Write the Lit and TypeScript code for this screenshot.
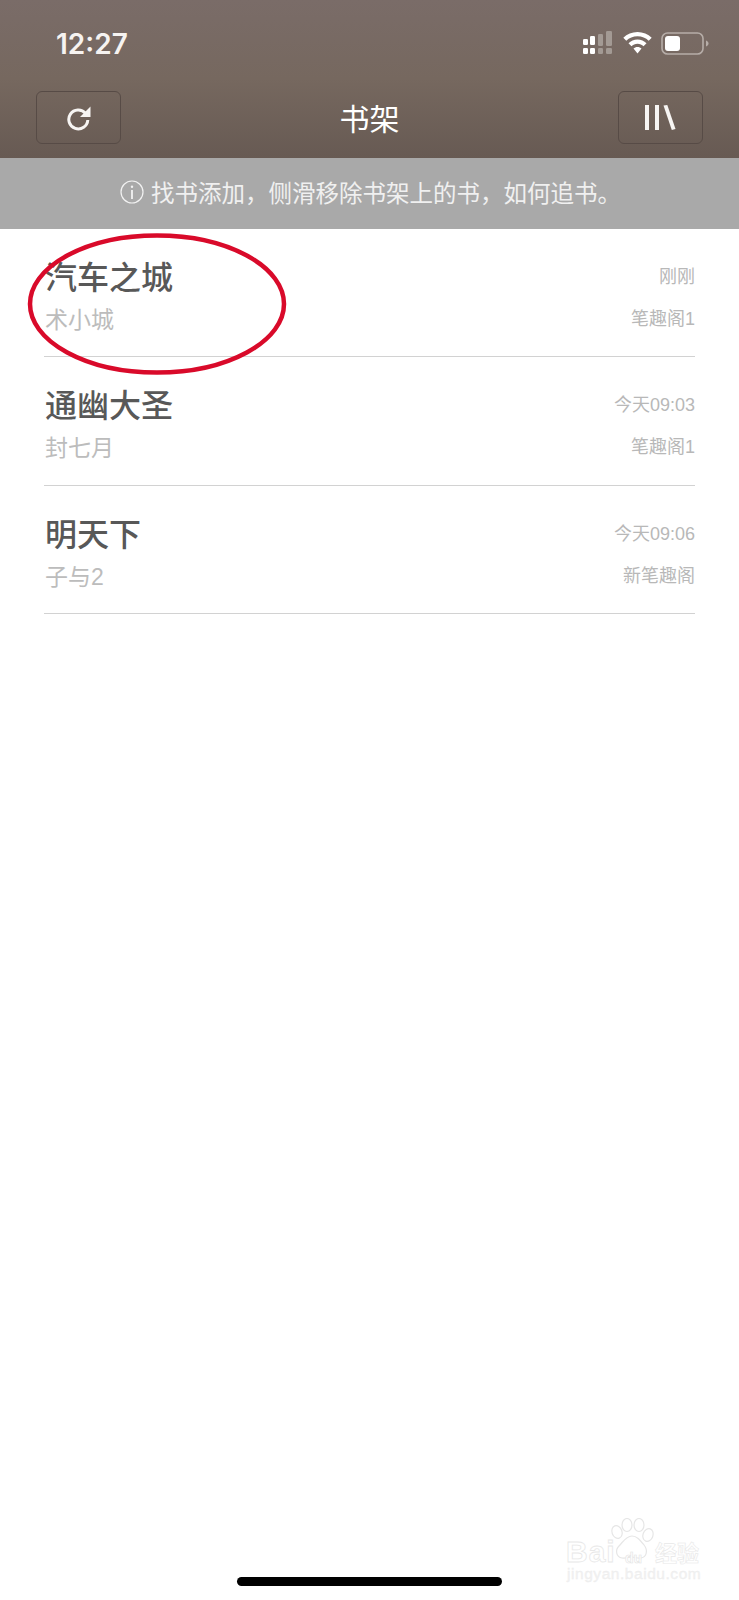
import { LitElement, html, css, svg } from "lit";
import { customElement } from "lit/decorators.js";

const books = [
  { title: "汽车之城", author: "术小城", time: "刚刚", source: "笔趣阁1" },
  { title: "通幽大圣", author: "封七月", time: "今天09:03", source: "笔趣阁1" },
  { title: "明天下", author: "子与2", time: "今天09:06", source: "新笔趣阁" },
];

@customElement("app-root")
export class AppRoot extends LitElement {
  static styles = css`
    :host {
      display: block;
      position: relative;
      width: 739px;
      height: 1600px;
      overflow: hidden;
      background: #fff;
      font-family: "Liberation Sans", "Noto Sans CJK SC", sans-serif;
    }
    .top {
      height: 158px;
      box-sizing: border-box;
      background: linear-gradient(180deg, #7a6c68 0%, #76685f 50%, #675a53 100%);
      display: flex;
      flex-direction: column;
      padding: 0 36px 14px;
      color: #fff;
    }
    .status {
      height: 91px;
      display: flex;
      align-items: flex-start;
      justify-content: space-between;
    }
    .time {
      font-family: Inter, "Liberation Sans", sans-serif;
      font-size: 28px;
      font-weight: 600;
      line-height: 32px;
      margin: 28px 0 0 20px;
      color: #f6f3f1;
    }
    .status-icons {
      display: flex;
      align-items: center;
      gap: 9px;
      margin: 31px -6px 0 0;
    }
    .status-icons svg {
      display: block;
    }
    .nav {
      height: 53px;
      display: flex;
      align-items: center;
      justify-content: space-between;
    }
    .btn {
      width: 85px;
      height: 53px;
      box-sizing: border-box;
      border: 1px solid #574b46;
      border-radius: 6px;
      display: flex;
      align-items: center;
      justify-content: center;
    }
    .page-title {
      font-family: "Noto Sans CJK SC", sans-serif;
      font-size: 30px;
      line-height: 53px;
      color: #fff;
    }
    .notice {
      height: 71px;
      box-sizing: border-box;
      padding: 0 0 4px 2px;
      background: #a9a9a9;
      display: flex;
      align-items: center;
      justify-content: center;
      gap: 7px;
      color: #f0f0f0;
      font-family: "Noto Sans CJK SC", sans-serif;
      font-size: 23.5px;
      font-weight: 400;
    }
    .notice svg {
      display: block;
    }
    .list {
      padding: 0 44px;
    }
    .row {
      height: 128.3px;
      box-sizing: border-box;
      border-bottom: 1px solid #d2d2d2;
      display: flex;
      justify-content: space-between;
      padding-top: 24px;
    }
    .left,
    .right-col {
      display: flex;
      flex-direction: column;
    }
    .left {
      padding-left: 1px;
    }
    .right-col {
      align-items: flex-end;
      padding-top: 11px;
      color: #b8b8b8;
      font-size: 18px;
    }
    .right-col .t {
      line-height: 26px;
      height: 26px;
    }
    .right-col .s {
      line-height: 26px;
      margin-top: 16px;
    }
    .name {
      font-family: "Noto Sans CJK SC", sans-serif;
      font-size: 32px;
      font-weight: 500;
      line-height: 44px;
      color: #585858;
    }
    .author {
      font-size: 23px;
      line-height: 34px;
      margin-top: 6px;
      color: #bcbcbc;
    }
    .circle {
      position: absolute;
      left: 24px;
      top: 230px;
      pointer-events: none;
    }
    .home {
      position: absolute;
      left: 237px;
      top: 1577px;
      width: 265px;
      height: 9px;
      border-radius: 5px;
      background: #000;
    }
    .mark {
      position: absolute;
      left: 566px;
      top: 1518px;
      width: 136px;
      height: 68px;
      color: #fff;
    }
    .mark svg {
      position: absolute;
      left: 44px;
      top: 0;
    }
    .mark span {
      position: absolute;
      white-space: nowrap;
      color: #fff;
      -webkit-text-stroke: 0.8px #e8e8e8;
    }
    .mark .bai {
      left: 0;
      top: 16px;
      font: 700 30px/36px "Liberation Sans", sans-serif;
      letter-spacing: 1px;
    }
    .mark .du {
      left: 59px;
      top: 32px;
      font: 700 14px/16px "Liberation Sans", sans-serif;
      -webkit-text-stroke: 0.6px #e4e4e4;
    }
    .mark .jy {
      left: 89px;
      top: 19px;
      font: 700 22px/28px "Noto Sans CJK SC", sans-serif;
      -webkit-text-stroke: 0.6px #e8e8e8;
    }
    .mark .url {
      left: 1px;
      top: 46px;
      color: #f2f2f2;
      font: 400 15.5px/20px "Liberation Sans", sans-serif;
      letter-spacing: 0.55px;
      -webkit-text-stroke: 0.3px #ececec;
    }
  `;

  private signal() {
    return html`<svg width="31" height="24" viewBox="0 0 31 24">
      <g fill="#fff">
        <rect x="0" y="8" width="5" height="6" rx="1.2" />
        <rect x="7" y="5" width="5" height="9" rx="1.2" />
        <rect x="0" y="17" width="5" height="6" rx="1.2" />
        <rect x="7" y="17" width="5" height="6" rx="1.2" />
      </g>
      <g fill="#a39a94">
        <rect x="15" y="3" width="5" height="12" rx="1.2" />
        <rect x="23" y="0" width="6" height="15" rx="1.2" />
        <rect x="15" y="17" width="5" height="6" rx="1.2" />
        <rect x="23" y="17" width="6" height="6" rx="1.2" />
      </g>
    </svg>`;
  }

  private wifi() {
    return html`<svg width="29" height="22" viewBox="0 0 29 22" fill="#fff">
      <path d="M14.5 0C9 0 4 2.2 .3 5.8l3 3C6.200 6 10.100 4.300 14.500 4.300S22.800 6 25.700 8.800l3-3C25 2.200 20 0 14.500 0z" />
      <path d="M14.500 7.500c-3.500 0-6.700 1.400-9 3.700l3 3c1.500-1.500 3.600-2.400 6-2.400s4.500.9 6 2.400l3-3c-2.300-2.300-5.500-3.700-9-3.700z" />
      <path d="M14.500 15c-1.600 0-3 .6-4 1.600l4 5 4-5c-1-1-2.400-1.600-4-1.600z" />
    </svg>`;
  }

  private battery() {
    return html`<svg width="48" height="23" viewBox="0 0 48 23">
      <rect x="1" y="1" width="41" height="21" rx="5.500" fill="none" stroke="#b6ada8" stroke-width="1.600" />
      <rect x="4" y="4" width="15" height="15" rx="3" fill="#fff" />
      <path d="M45 8.500c1.500.5 2.500 1.600 2.500 3s-1 2.500-2.500 3z" fill="#b6ada8" />
    </svg>`;
  }

  private refresh() {
    return html`<svg width="26" height="26" viewBox="0 0 26 26" fill="none">
      <path d="M19.500 8.200A9.500 9.500 0 1 0 21.800 15" stroke="#f7f5f3" stroke-width="3" />
      <path d="M24.500 1.500V12H14z" fill="#f7f5f3" />
    </svg>`;
  }

  private shelf() {
    return html`<svg width="31" height="25" viewBox="0 0 31 25" fill="#f7f5f3">
      <rect x="0" y="0" width="4" height="25" />
      <rect x="10" y="0" width="4" height="25" />
      <path d="M18.500 0.500 22.300 0 30.500 24 26.800 25z" />
    </svg>`;
  }

  private info() {
    return html`<svg width="24" height="24" viewBox="0 0 24 24" fill="none" stroke="#f2f2f2">
      <circle cx="12" cy="12" r="11" stroke-width="1.200" />
      <path d="M12 10v9" stroke-width="1.800" />
      <circle cx="12" cy="6.800" r="1.200" fill="#f2f2f2" stroke="none" />
    </svg>`;
  }

  private paw() {
    return svg`<g fill="#fff" stroke="#e6e6e6" stroke-width="1.200">
      <ellipse cx="7" cy="14" rx="5" ry="6.500" transform="rotate(-20 7 14)" />
      <ellipse cx="17" cy="7" rx="5" ry="6.500" />
      <ellipse cx="29" cy="7" rx="5" ry="6.500" />
      <ellipse cx="38" cy="17" rx="5" ry="6.500" transform="rotate(20 38 17)" />
      <path d="M22 18c5 0 8 4 12 9 4 5 3 12-3 13-4 .6-6-1-9-1s-6 1.600-10 1c-6-1-7-8-3-12 4-4 7-10 13-10z" />
    </g>`;
  }

  render() {
    return html`
      <div class="top">
        <div class="status">
          <div class="time">12:27</div>
          <div class="status-icons">${this.signal()}${this.wifi()}${this.battery()}</div>
        </div>
        <div class="nav">
          <div class="btn">${this.refresh()}</div>
          <div class="page-title">书架</div>
          <div class="btn">${this.shelf()}</div>
        </div>
      </div>
      <div class="notice">${this.info()}<span>找书添加，侧滑移除书架上的书，如何追书。</span></div>
      <div class="list">
        ${books.map(
          (b) => html`<div class="row">
            <div class="left">
              <div class="name">${b.title}</div>
              <div class="author">${b.author}</div>
            </div>
            <div class="right-col">
              <div class="t">${b.time}</div>
              <div class="s">${b.source}</div>
            </div>
          </div>`
        )}
      </div>
      <svg class="circle" width="270" height="150" viewBox="0 0 270 150" fill="none">
        <ellipse cx="133" cy="74" rx="127" ry="68.500" stroke="#d90a2a" stroke-width="4.500" />
      </svg>
      <div class="home"></div>
      <div class="mark">
        <svg width="46" height="42" viewBox="0 0 46 42">${this.paw()}</svg>
        <span class="bai">Bai</span>
        <span class="du">du</span>
        <span class="jy">经验</span>
        <span class="url">jingyan.baidu.com</span>
      </div>
    `;
  }
}
